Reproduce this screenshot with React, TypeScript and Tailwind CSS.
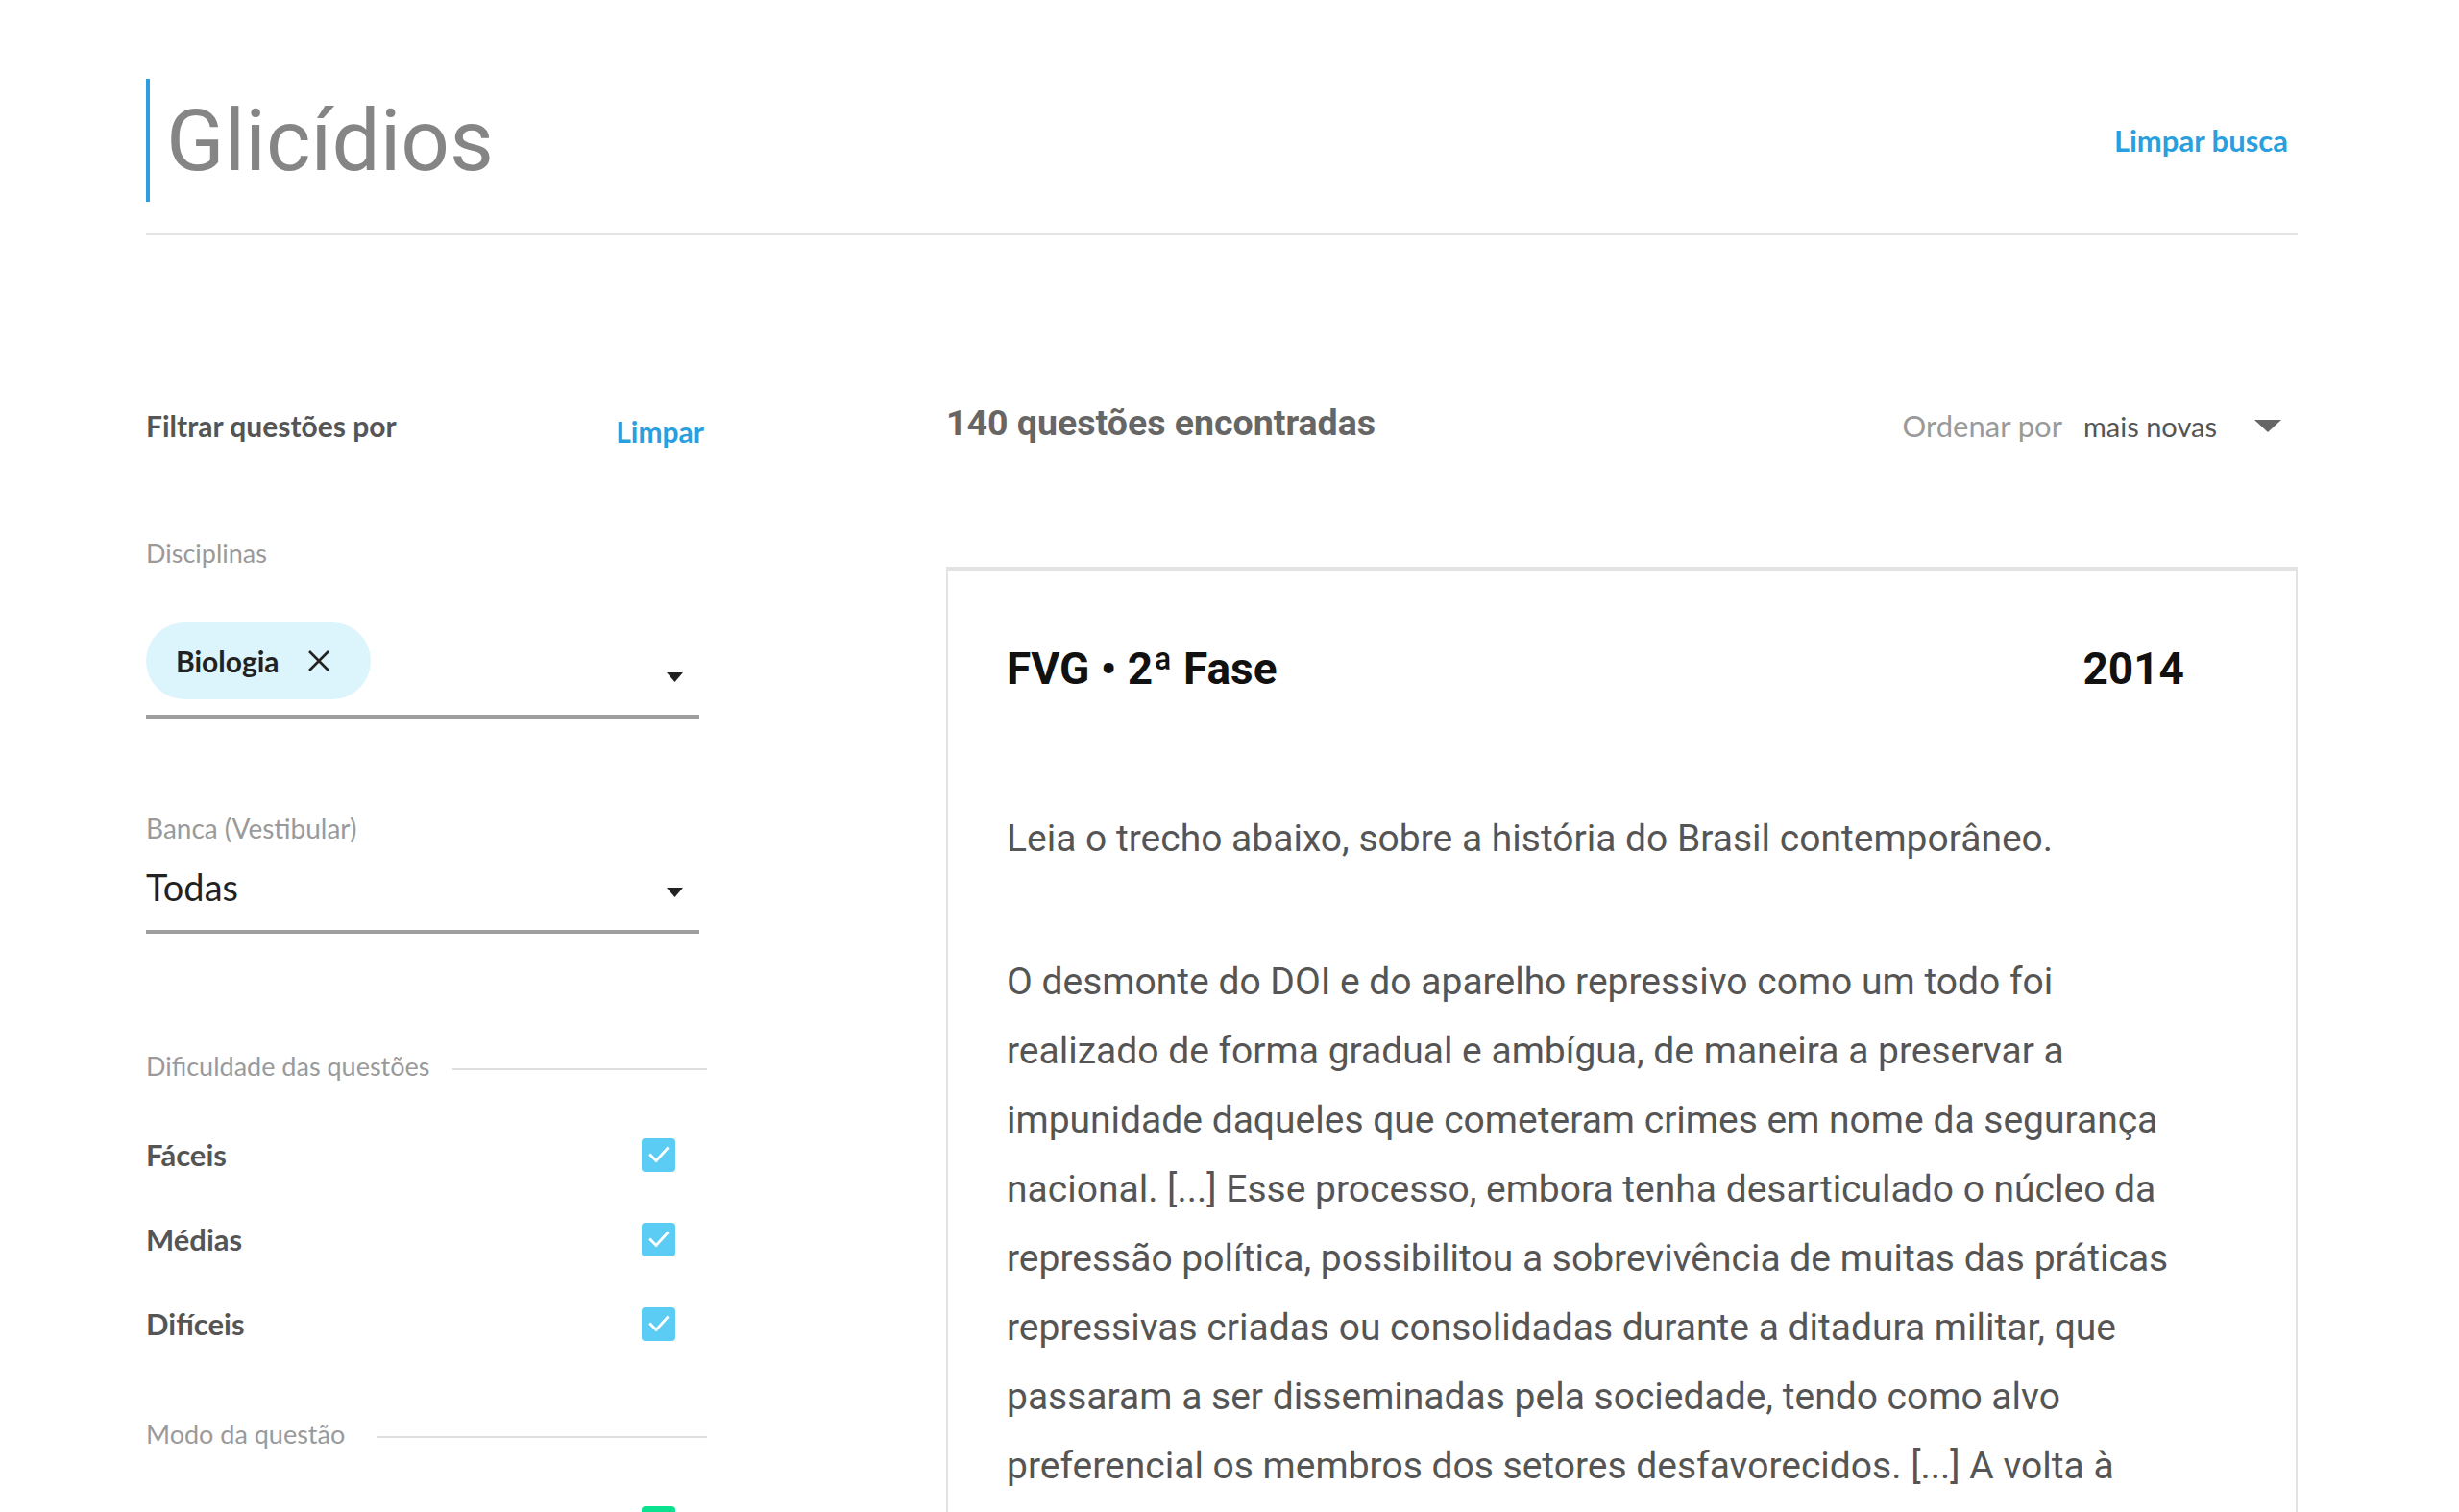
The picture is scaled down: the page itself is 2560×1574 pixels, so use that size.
import React from "react";

function Caret({ className }: { className?: string }) {
  return (
    <svg className={className} width="17" height="10" viewBox="0 0 17 10">
      <path d="M0 0 H17 L8.5 10 Z" fill="#222" />
    </svg>
  );
}

function CheckBox({ color }: { color: string }) {
  return (
    <div
      className={
        "w-[35px] h-[35px] rounded-[4px] flex items-center justify-center " + color
      }
    >
      <svg width="28" height="28" viewBox="0 0 24 24" fill="none">
        <path
          d="M4.5 12.5l5 5L19.5 6.5"
          stroke="#fff"
          strokeWidth="2.4"
          strokeLinecap="square"
          strokeLinejoin="miter"
        />
      </svg>
    </div>
  );
}

function CheckRow({ label, color }: { label: string; color: string }) {
  return (
    <div className="h-[88px] flex items-center justify-between pr-[33px]">
      <span className="text-[31px] font-bold text-[#555] leading-none">{label}</span>
      <CheckBox color={color} />
    </div>
  );
}

function SectionLabel({ label, gap }: { label: string; gap: string }) {
  return (
    <div className={"h-[40px] flex items-center " + gap}>
      <span className="text-[27px] text-[#9a9a9a] leading-[40px] whitespace-nowrap">{label}</span>
      <div className="flex-1 h-[2px] bg-[#dedede] mt-[6px]" />
    </div>
  );
}

const lines = [
  "O desmonte do DOI e do aparelho repressivo como um todo foi",
  "realizado de forma gradual e ambígua, de maneira a preservar a",
  "impunidade daqueles que cometeram crimes em nome da segurança",
  "nacional. [...] Esse processo, embora tenha desarticulado o núcleo da",
  "repressão política, possibilitou a sobrevivência de muitas das práticas",
  "repressivas criadas ou consolidadas durante a ditadura militar, que",
  "passaram a ser disseminadas pela sociedade, tendo como alvo",
  "preferencial os membros dos setores desfavorecidos. [...] A volta à",
];

export default function App() {
  return (
    <div className="w-[2560px] h-[1574px] overflow-hidden bg-white font-[Lato,sans-serif]">
      <div className="ml-[152px] w-[2240px]">
        <header className="pt-[82px] flex items-center justify-between">
          <div className="h-[128px] border-l-[4px] border-[#2d9ee0] pl-[17px] flex items-center">
            <h1 className="font-[Roboto,sans-serif] text-[89px] leading-none text-[#858585] font-normal">
              Glicídios
            </h1>
          </div>
          <a className="mr-[10px] text-[31px] font-bold text-[#2a9fe0] leading-none">Limpar busca</a>
        </header>
        <div className="mt-[33px] h-[2px] bg-[#e3e3e3]" />

        <main className="mt-[173px] flex">
          <aside className="w-[584px] shrink-0 flex flex-col">
            <div className="h-[50px] flex items-start justify-between">
              <span className="leading-[50px] text-[30px] font-bold text-[#555]">Filtrar questões por</span>
              <span className="mt-[6px] leading-[50px] text-[30px] font-bold text-[#2a9fe0] mr-[3px]">
                Limpar
              </span>
            </div>

            <div className="mt-[88px] h-[40px] leading-[40px] text-[27px] text-[#9a9a9a]">Disciplinas</div>

            <div className="mt-[52px] w-[576px] h-[100px] border-b-[4px] border-[#9e9e9e] flex items-start justify-between">
              <div className="h-[80px] rounded-full bg-[#dcf4fc] pl-[31px] pr-[42px] flex items-center gap-[29px]">
                <span className="text-[30px] font-bold text-[#222] leading-none">Biologia</span>
                <svg width="24" height="24" viewBox="0 0 24 24" fill="none">
                  <path d="M2 2L22 22M22 2L2 22" stroke="#222" strokeWidth="2.6" />
                </svg>
              </div>
              <Caret className="self-end mb-[34px] mr-[17px]" />
            </div>

            <div className="mt-[94px] h-[40px] leading-[40px] text-[28px] text-[#9a9a9a]">Banca (Vestibular)</div>
            <div className="w-[576px] h-[90px] border-b-[4px] border-[#9e9e9e] flex items-center justify-between">
              <span className="mb-[5px] text-[38px] text-[#222] leading-none">Todas</span>
              <Caret className="mt-[7px] mr-[17px]" />
            </div>

            <div className="mt-[118px]">
              <SectionLabel label="Dificuldade das questões" gap="gap-[24px]" />
            </div>
            <div className="mt-[28px] flex flex-col">
              <CheckRow label="Fáceis" color="bg-[#5bcdf4]" />
              <CheckRow label="Médias" color="bg-[#5bcdf4]" />
              <CheckRow label="Difíceis" color="bg-[#5bcdf4]" />
            </div>

            <div className="mt-[51px]">
              <SectionLabel label="Modo da questão" gap="gap-[33px]" />
            </div>
            <div className="mt-[28px] flex flex-col">
              <CheckRow label="Múltipla escolha" color="bg-[#0be28f]" />
            </div>
          </aside>

          <section className="ml-[249px] w-[1407px] shrink-0">
            <div className="h-[50px] flex items-center justify-between">
              <span className="mb-[7px] font-[Roboto,sans-serif] font-bold text-[37.5px] text-[#666] leading-[50px]">
                140 questões encontradas
              </span>
              <div className="flex items-center">
                <span className="text-[31px] text-[#9a9a9a] leading-none">Ordenar por</span>
                <span className="ml-[22px] text-[29px] text-[#555] leading-none">mais novas</span>
                <svg className="ml-[39px] mr-[17px]" width="28" height="13" viewBox="0 0 28 13">
                  <path d="M0 0H28L14 13Z" fill="#666" />
                </svg>
              </div>
            </div>

            <div className="mt-[122px] h-[1100px] border-t-[4px] border-x-[2px] border-[#e3e3e3] pl-[61px] pr-[116px] pt-[77px]">
              <div className="h-[50px] flex items-center justify-between font-[Roboto,sans-serif] font-bold text-[46px] text-[#111] leading-none">
                <span>FVG • 2ª Fase</span>
                <span>2014</span>
              </div>
              <p className="mt-[116px] font-[Roboto,sans-serif] text-[39px] leading-[72px] text-[#555]">
                Leia o trecho abaixo, sobre a história do Brasil contemporâneo.
              </p>
              <p className="mt-[77px] font-[Roboto,sans-serif] text-[39px] leading-[72px] text-[#555]">
                {lines.map((l, i) => (
                  <span key={i} className="block whitespace-nowrap">
                    {l}
                  </span>
                ))}
              </p>
            </div>
          </section>
        </main>
      </div>
    </div>
  );
}
